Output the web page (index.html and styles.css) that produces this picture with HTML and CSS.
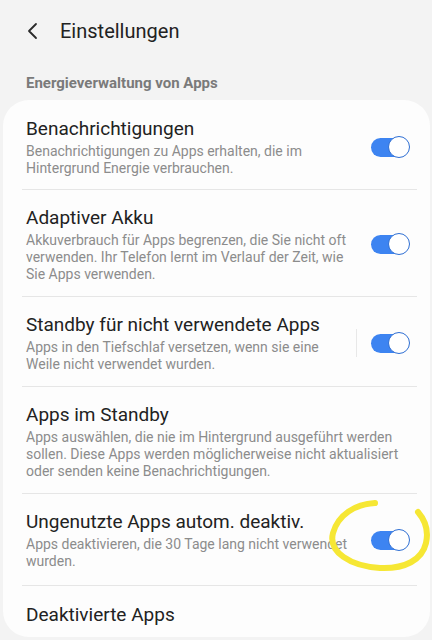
FILE: index.html
```html
<!DOCTYPE html>
<html lang="de">
<head>
<meta charset="utf-8">
<link rel="stylesheet" href="styles.css">
</head>
<body>
<div class="screen">
  <header class="appbar">
    <svg class="back" width="14" height="18" viewBox="0 0 14 18"><path d="M10 2 L3 9 L10 16" fill="none" stroke="#2a2a2a" stroke-width="1.8" stroke-linecap="round" stroke-linejoin="round"/></svg>
    <h1 class="title">Einstellungen</h1>
  </header>
  <div class="section">Energieverwaltung von Apps</div>
  <div class="card">
    <div class="row">
      <div class="text">
        <div class="rtitle">Benachrichtigungen</div>
        <div class="rsub">Benachrichtigungen zu Apps erhalten, die im<br>Hintergrund Energie verbrauchen.</div>
      </div>
      <div class="switch"><span class="thumb"></span></div>
    </div>
    <div class="row">
      <div class="text">
        <div class="rtitle">Adaptiver Akku</div>
        <div class="rsub">Akkuverbrauch für Apps begrenzen, die Sie nicht oft<br>verwenden. Ihr Telefon lernt im Verlauf der Zeit, wie<br>Sie Apps verwenden.</div>
      </div>
      <div class="switch"><span class="thumb"></span></div>
    </div>
    <div class="row">
      <div class="text">
        <div class="rtitle">Standby für nicht verwendete Apps</div>
        <div class="rsub">Apps in den Tiefschlaf versetzen, wenn sie eine<br>Weile nicht verwendet wurden.</div>
      </div>
      <div class="vsep"></div>
      <div class="switch"><span class="thumb"></span></div>
    </div>
    <div class="row">
      <div class="text">
        <div class="rtitle">Apps im Standby</div>
        <div class="rsub">Apps auswählen, die nie im Hintergrund ausgeführt werden<br>sollen. Diese Apps werden möglicherweise nicht aktualisiert<br>oder senden keine Benachrichtigungen.</div>
      </div>
    </div>
    <div class="row tall">
      <div class="text">
        <div class="rtitle">Ungenutzte Apps autom. deaktiv.</div>
        <div class="rsub">Apps deaktivieren, die 30 Tage lang nicht verwendet<br>wurden.</div>
      </div>
      <div class="switch"><span class="thumb"></span></div>
    </div>
    <div class="row last">
      <div class="text">
        <div class="rtitle">Deaktivierte Apps</div>
      </div>
    </div>
  </div>
  <svg class="mark" width="432" height="640" viewBox="0 0 432 640"><path d="M375 503 C355 504 338 515 333 533 C328 552 350 566 380 568 C405 569 422 560 426 543 C429 530 424 519 418 512" fill="none" stroke="#f6e734" stroke-width="6" stroke-linecap="round" stroke-linejoin="round"/></svg>
</div>
</body>
</html>
```
FILE: styles.css
```css
html, body {
  margin: 0;
  padding: 0;
  background: #f3f3f3;
}
body {
  font-family: Roboto, "Noto Sans", "Liberation Sans", sans-serif;
  color: #222;
}
.screen {
  position: relative;
  width: 432px;
  height: 640px;
  overflow: hidden;
}
.appbar {
  display: flex;
  align-items: center;
  height: 62px;
  padding-left: 26px;
}
.back {
  display: block;
  margin-right: 20px;
}
.title {
  margin: 0;
  font-size: 20px;
  font-weight: 400;
  color: #222;
}
.section {
  padding: 12px 0 0 26px;
  height: 26px;
  font-size: 15px;
  line-height: 18px;
  font-weight: 700;
  color: #7a7a7a;
}
.card {
  margin: 0 2px 0 3px;
  background: #fdfdfd;
  border-radius: 26px;
  height: 537px;
  box-sizing: border-box;
  overflow: hidden;
}
.row {
  display: flex;
  align-items: center;
  margin: 0 13px 0 19px;
  padding: 16px 7px 13px 4px;
  border-bottom: 1px solid #e6e6e6;
}
.row:first-child {
  padding-top: 17px;
  padding-bottom: 12px;
}
.row.tall {
  padding-bottom: 15px;
}
.row.last {
  border-bottom: none;
  padding-top: 17px;
}
.text {
  flex: 1;
  min-width: 0;
}
.rtitle {
  font-size: 19px;
  line-height: 24px;
  color: #222;
}
.rsub {
  margin-top: 2px;
  font-size: 14px;
  line-height: 17px;
  color: #8c8c8c;
}
.vsep {
  width: 1px;
  height: 28px;
  background: #e8e8e8;
  margin-right: 14px;
}
.switch {
  position: relative;
  width: 39px;
  height: 23px;
  flex: none;
}
.switch::before {
  content: "";
  position: absolute;
  left: 0;
  top: 2px;
  width: 34px;
  height: 19px;
  border-radius: 10px;
  background: #3d84f1;
}
.thumb {
  position: absolute;
  right: 0;
  top: 0;
  width: 20px;
  height: 20px;
  border-radius: 50%;
  background: #fff;
  border: 1.5px solid #2f6fd3;
}
.mark {
  position: absolute;
  left: 0;
  top: 0;
  pointer-events: none;
}
```
